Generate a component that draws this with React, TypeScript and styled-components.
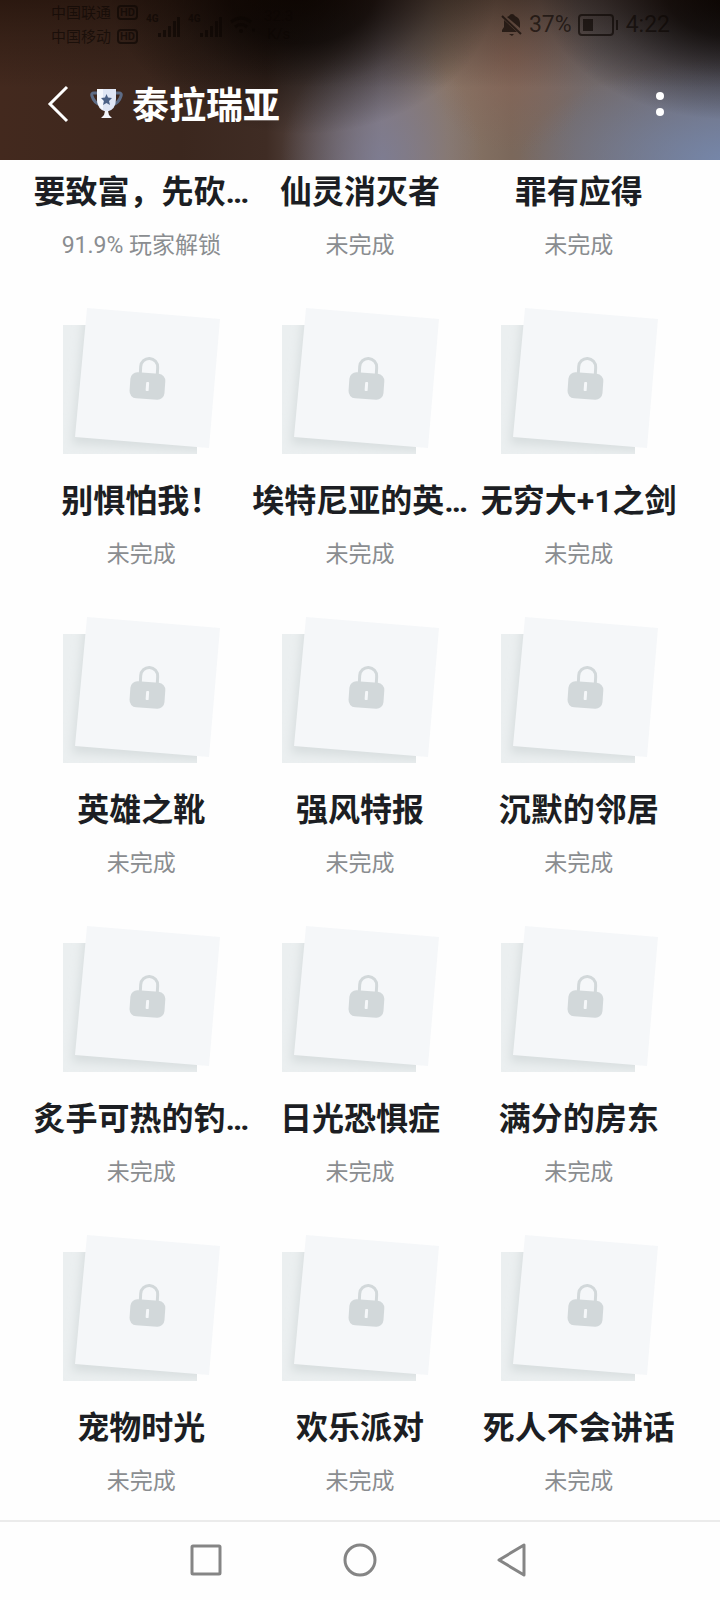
import React from 'react';
import styled, { createGlobalStyle } from 'styled-components';

const Global = createGlobalStyle`
  * { box-sizing: border-box; }
  body { margin: 0; background: #fefefe; font-family: Roboto, "Noto Sans CJK SC", sans-serif; }
`;

const Page = styled.div`
  display: flex;
  flex-direction: column;
  min-height: 100vh;
`;

const Header = styled.header`
  height: 160px;
  background:
    linear-gradient(to bottom, rgba(20, 8, 2, 0.5) 0, rgba(20, 10, 4, 0.28) 22%, rgba(20, 10, 4, 0) 55%),
    radial-gradient(ellipse 27% 80% at 102% -5%, rgba(0, 0, 0, 1) 0, rgba(4, 2, 1, 0.82) 35%, rgba(6, 4, 4, 0.35) 68%, rgba(10, 5, 4, 0) 100%),
    radial-gradient(ellipse 27% 92% at 42% -8%, rgba(4, 2, 1, 0.98) 0, rgba(5, 2, 1, 0.82) 38%, rgba(5, 2, 1, 0.35) 68%, rgba(5, 2, 1, 0) 100%),
    radial-gradient(ellipse 12% 60% at 71% 35%, rgba(138, 98, 84, 0.6), rgba(138, 98, 84, 0)),
    radial-gradient(ellipse 30% 65% at 102% 102%, #7688ac 0%, rgba(118, 136, 172, 0) 100%),
    radial-gradient(ellipse 14% 75% at 53% 100%, rgba(124, 126, 152, 0.75) 0%, rgba(124, 126, 152, 0) 100%),
    linear-gradient(to right, #43291e 0, #3b271e 25%, #3f2c24 37%, #5e504d 45%, #84777a 53%, #8a7768 62%, #7b685b 71%, #736a6a 80%, #6f6b75 100%);
`;

const StatusBar = styled.div`
  display: flex;
  justify-content: space-between;
  height: 48px;
  padding: 1px 50px 0 51px;
  color: rgba(12, 6, 3, 0.65);
`;

const StatusGroup = styled.div<{ $gap: number }>`
  display: flex;
  align-items: center;
  gap: ${(p) => p.$gap}px;
`;

const Carriers = styled.div`
  display: flex;
  flex-direction: column;
  font-size: 15px;
  line-height: 24px;
`;

const Carrier = styled.span`
  display: flex;
  align-items: center;
  gap: 6px;
`;

const Hd = styled.b`
  padding: 0 1px;
  border: 2px solid;
  border-radius: 4px;
  font-size: 11px;
  line-height: 11px;
`;

const Speed = styled.span`
  font-size: 15px;
  line-height: 18px;
  text-align: center;
`;

const StatusText = styled.span`
  font-size: 23px;
  line-height: 28px;
`;

const TitleBar = styled.div`
  display: flex;
  align-items: center;
  height: 112px;
  padding: 0 44px;
`;

const IconButton = styled.button`
  display: flex;
  padding: 0;
  border: 0;
  background: none;
  cursor: pointer;
`;

const Title = styled.h1`
  flex: 1;
  display: flex;
  align-items: center;
  gap: 8px;
  margin: 0 0 0 18px;
  padding-top: 6px;
  color: #fff;
  font-size: 37px;
  line-height: 48px;
`;

const Trophy = styled.svg`
  margin-bottom: 6px;
`;

const Grid = styled.ul`
  flex: 1;
  display: grid;
  grid-template-columns: repeat(3, minmax(0, 1fr));
  align-content: start;
  row-gap: 42px;
  margin: 0;
  padding: 10px 32px 0 32px;
  list-style: none;
`;

const Achievement = styled.li`
  display: flex;
  flex-direction: column;
  align-items: center;
`;

const Name = styled.h2`
  margin: 0 0 16px;
  color: #1c1e23;
  font-size: 32px;
  line-height: 44px;
  white-space: nowrap;
`;

const State = styled.p`
  margin: 0;
  color: #8a8d90;
  font-size: 23px;
  line-height: 32px;
  white-space: nowrap;
`;

const Art = styled.svg`
  margin-bottom: 24px;
`;

const NavBar = styled.nav`
  display: flex;
  justify-content: center;
  align-items: center;
  gap: 118px;
  height: 80px;
  padding-bottom: 2px;
  border-top: 2px solid #ebebeb;
`;

function LockedArt({ id }: { id: string }) {
  return (
    <Art width="160" height="151" viewBox="-1 -1 160 151" aria-hidden="true">
      <defs>
        <clipPath id={`back-${id}`}><rect x="1" y="20" width="134" height="129" /></clipPath>
        <filter id={`soft-${id}`} x="-20%" y="-20%" width="140%" height="140%"><feGaussianBlur stdDeviation="5" /></filter>
      </defs>
      <rect x="1" y="20" width="134" height="129" fill="#ebeff0" />
      <g clipPath={`url(#back-${id})`}>
        <path d="M22 8 155 20 145 146 10 139Z" fill="#d8dedf" filter={`url(#soft-${id})`} />
      </g>
      <path d="M25 3 158 14 147 143 13 132Z" fill="#f5f7f9" />
      <path d="M78 69V62a8.500 8.500 0 0 1 17 0v9" transform="rotate(3 86 75)" fill="none" stroke="#d2d8da" strokeWidth="3" />
      <rect x="68" y="68" width="35" height="26" rx="7" transform="rotate(4 85 80)" fill="#d2d8da" />
      <rect x="84" y="77" width="3" height="9" rx="1" transform="rotate(4 85 80)" fill="#f5f7f9" />
    </Art>
  );
}

function Signal() {
  return (
    <svg width="34" height="26" viewBox="0 0 34 26" fill="currentColor" aria-hidden="true">
      <text x="0" y="10" fontSize="10" fontWeight="700">4G</text>
      <path d="M12 21h3v4h-3zM17 18h3v7h-3zM22 14h3v11h-3zM27 9h3v16h-3zM31 5h3v20h-3z" />
    </svg>
  );
}

const items: { name: string; state: string; art: boolean }[] = [
  ['要致富，先砍…', '91.9% 玩家解锁'], ['仙灵消灭者'], ['罪有应得'],
  ['别惧怕我！'], ['埃特尼亚的英…'], ['无穷大+1之剑'],
  ['英雄之靴'], ['强风特报'], ['沉默的邻居'],
  ['炙手可热的钓…'], ['日光恐惧症'], ['满分的房东'],
  ['宠物时光'], ['欢乐派对'], ['死人不会讲话'],
].map(([name, state = '未完成'], i) => ({ name, state, art: i > 2 }));

export default function App() {
  return (
    <Page>
      <Global />
      <Header>
        <StatusBar>
          <StatusGroup $gap={8}>
            <Carriers>
              <Carrier>中国联通 <Hd>HD</Hd></Carrier>
              <Carrier>中国移动 <Hd>HD</Hd></Carrier>
            </Carriers>
            <Signal />
            <Signal />
            <svg width="26" height="18" viewBox="0 0 26 18" fill="none" stroke="currentColor" strokeWidth="3" aria-hidden="true">
              <path d="M1 6q10-8 20 0M5 11q6-5 12 0" />
              <circle cx="11" cy="15" r="2" fill="currentColor" stroke="none" />
              <path d="M22 14h3" />
            </svg>
            <Speed>32.3<br />K/s</Speed>
          </StatusGroup>
          <StatusGroup $gap={6}>
            <svg width="22" height="22" viewBox="0 0 22 22" fill="currentColor" aria-hidden="true">
              <path d="M3 6 16 18H1v-2l2-3zM6 3l2-1q1-2 3-2t3 2q5 2 5 7v5zM8 20h5l-2 2z" />
              <path d="M1 2 20 20" fill="none" stroke="currentColor" strokeWidth="2" />
            </svg>
            <StatusText>37%</StatusText>
            <svg width="42" height="22" viewBox="0 0 42 22" fill="none" stroke="currentColor" strokeWidth="2" aria-hidden="true">
              <rect x="1" y="1" width="34" height="20" rx="3" />
              <path d="M39 6v10" />
              <path d="M5 5h10v12H5z" fill="currentColor" stroke="none" />
            </svg>
            <StatusText>4:22</StatusText>
          </StatusGroup>
        </StatusBar>
        <TitleBar>
          <IconButton aria-label="返回">
            <svg width="28" height="38" viewBox="0 0 28 38" fill="none" stroke="#fff" strokeWidth="3">
              <path d="M23 2 6 19l17 17" />
            </svg>
          </IconButton>
          <Title>
            <Trophy width="34" height="34" viewBox="0 0 34 34" aria-hidden="true">
              <path d="M8 6H4q-3 0-2 3 2 7 9 9M25 6h4q3 0 2 3-2 7-9 9" fill="none" stroke="#5d6c86" strokeWidth="3" />
              <path d="M7 2h19v10q0 11-9.500 13Q7 23 7 12z" fill="#dfe6f5" />
              <path d="M7 2h6v21Q7 19 7 12z" fill="#f4f7fd" />
              <path d="M15 24h3l1 4 3 3H11l3-3z" fill="#f3f5fa" />
              <path d="m16.500 7 1.500 3.500 4 .5-3 3 1 4-3.500-2-3.500 2 1-4-3-3 4-.5z" fill="#4c6287" />
            </Trophy>
            泰拉瑞亚
          </Title>
          <IconButton aria-label="更多">
            <svg width="32" height="32" viewBox="0 0 32 32" fill="#fff">
              <circle cx="16" cy="8" r="4" /><circle cx="16" cy="24" r="4" />
            </svg>
          </IconButton>
        </TitleBar>
      </Header>
      <Grid>
        {items.map((it, i) => (
          <Achievement key={it.name}>
            {it.art && <LockedArt id={String(i)} />}
            <Name>{it.name}</Name>
            <State>{it.state}</State>
          </Achievement>
        ))}
      </Grid>
      <NavBar>
        <IconButton aria-label="最近任务">
          <svg width="36" height="36" viewBox="0 0 36 36" fill="none" stroke="#858585" strokeWidth="3"><rect x="4" y="4" width="28" height="28" rx="1" /></svg>
        </IconButton>
        <IconButton aria-label="主屏幕">
          <svg width="36" height="36" viewBox="0 0 36 36" fill="none" stroke="#858585" strokeWidth="3"><circle cx="18" cy="18" r="15" /></svg>
        </IconButton>
        <IconButton aria-label="后退">
          <svg width="36" height="36" viewBox="0 0 36 36" fill="none" stroke="#858585" strokeWidth="3" strokeLinejoin="round"><path d="M28 3v30L3 18z" /></svg>
        </IconButton>
      </NavBar>
    </Page>
  );
}
